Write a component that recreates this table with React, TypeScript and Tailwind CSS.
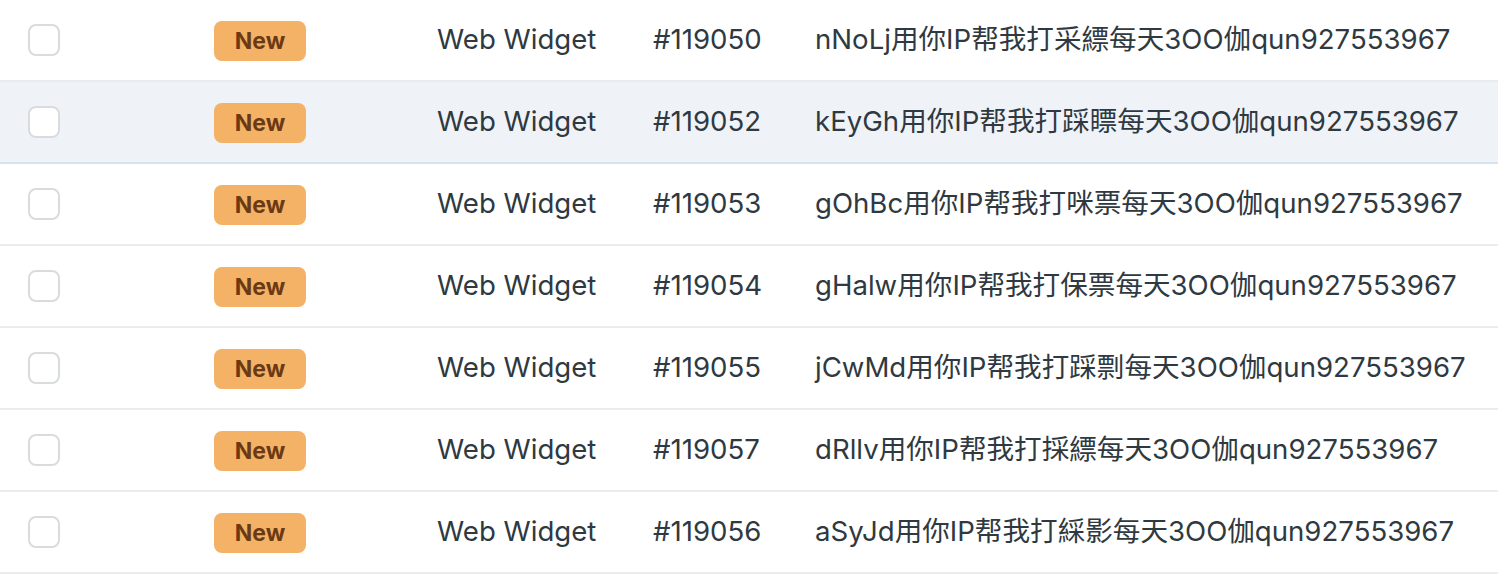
import type { FC } from 'react';

interface Ticket {
  id: number;
  subject: string;
  channel: string;
}

const tickets: Ticket[] = [
  { id: 119050, channel: 'Web Widget', subject: 'nNoLj用你IP帮我打采縹每天3OO伽qun927553967' },
  { id: 119052, channel: 'Web Widget', subject: 'kEyGh用你IP帮我打踩瞟每天3OO伽qun927553967' },
  { id: 119053, channel: 'Web Widget', subject: 'gOhBc用你IP帮我打咪票每天3OO伽qun927553967' },
  { id: 119054, channel: 'Web Widget', subject: 'gHalw用你IP帮我打保票每天3OO伽qun927553967' },
  { id: 119055, channel: 'Web Widget', subject: 'jCwMd用你IP帮我打踩剽每天3OO伽qun927553967' },
  { id: 119057, channel: 'Web Widget', subject: 'dRllv用你IP帮我打採縹每天3OO伽qun927553967' },
  { id: 119056, channel: 'Web Widget', subject: 'aSyJd用你IP帮我打綵影每天3OO伽qun927553967' },
];

const TicketRow: FC<{ ticket: Ticket; active?: boolean }> = ({ ticket, active }) => (
  <div
    className={`flex h-[82px] items-center border-b-2 ${
      active ? 'bg-[#eff3f8] border-[#d5e2ef]' : 'bg-white border-[#e9ebed]'
    }`}
  >
    {/* Checkbox */}
    <div className="w-[214px] pl-[28px] shrink-0">
      <div className="h-[32px] w-[32px] rounded-[8px] border-2 border-[#d8dcde] bg-white" />
    </div>

    {/* Status */}
    <div className="w-[223px] shrink-0">
      <span className="inline-flex h-[40px] w-[92px] items-center justify-center rounded-[8px] bg-[#f3b265] pb-px text-[23px] font-bold text-[#6b3a14]">
        New
      </span>
    </div>

    {/* Channel */}
    <div className="w-[216px] shrink-0">{ticket.channel}</div>

    {/* ID */}
    <div className="w-[162px] shrink-0">#{ticket.id}</div>

    {/* Subject */}
    <div className="flex-1 min-w-0 whitespace-nowrap">{ticket.subject}</div>
  </div>
);

export default function App() {
  return (
    <div
      className="w-[1498px] h-[582px] overflow-hidden bg-white text-[27.6px] text-[#2f3941]"
      style={{ fontFamily: 'Inter, "Noto Sans CJK SC", sans-serif' }}
    >
      {tickets.map((t, i) => (
        <TicketRow key={t.id} ticket={t} active={i === 1} />
      ))}
    </div>
  );
}
